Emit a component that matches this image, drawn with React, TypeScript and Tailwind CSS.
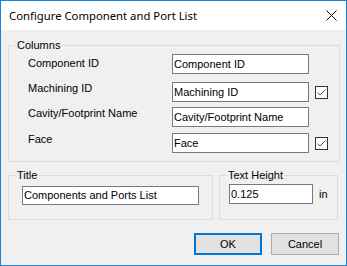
import React from "react"

const font = "font-['Liberation_Sans',Arial,sans-serif] text-[11px] text-black"

function TextBox({ value, width, height = 20 }: { value: string; width: number; height?: number }) {
    return (
        <div
            className={`bg-white border border-[#7a7a7a] pl-[1px] flex items-center leading-[13px] ${font}`}
            style={{ width, height }}
        >
            {value}
        </div>
    )
}

function CheckBox() {
    return (
        <div className="w-[13px] h-[13px] border border-[#333333] bg-white flex items-center justify-center">
            <svg width="11" height="11" viewBox="0 0 11 11">
                <polyline points="1.5,5.5 4,8 9.5,2.5" fill="none" stroke="#555555" strokeWidth="1" />
            </svg>
        </div>
    )
}

function Legend({ children }: { children: React.ReactNode }) {
    return <legend className={`ml-[7px] px-[1px] leading-[13px] ${font}`}>{children}</legend>
}

export default function App() {
    const rows = [
        { label: "Component ID", value: "Component ID", check: false, h: 28, lt: 3 },
        { label: "Machining ID", value: "Machining ID", check: true, h: 25, lt: 0 },
        { label: "Cavity/Footprint Name", value: "Cavity/Footprint Name", check: false, h: 26, lt: 0 },
        { label: "Face", value: "Face", check: true, h: 20, lt: 0 },
    ]
    return (
        <div className="w-[347px] h-[266px] border border-[#1883d7] flex flex-col bg-[#f0f0f0]">
            {/* title bar */}
            <div className="h-[29px] bg-white flex items-center justify-between pl-[8px] pr-[9px] shrink-0">
                <span className="font-['Noto_Sans',sans-serif] text-[11.3px] text-black leading-none">
                    Configure Component and Port List
                </span>
                <svg width="11" height="11" viewBox="0 0 11 11">
                    <path d="M0.5 0.5 L10.5 10.5 M10.5 0.5 L0.5 10.5" stroke="#000" strokeWidth="1" />
                </svg>
            </div>

            <div className="flex-1 flex flex-col pl-[7px] pr-[7px]">
                <fieldset className="mt-[9px] w-[332px] border border-[#dcdcdc]">
                    <Legend>Columns</Legend>
                    <div className="pt-[2px] pb-[8px] pl-[19px]">
                        {rows.map((r) => (
                            <div key={r.label} className="flex items-start" style={{ height: r.h }}>
                                <div className={`w-[144px] leading-[13px] ${font}`} style={{ marginTop: r.lt }}>
                                    {r.label}
                                </div>
                                <div className="flex items-center gap-[6px]">
                                    <TextBox value={r.value} width={137} />
                                    {r.check && <CheckBox />}
                                </div>
                            </div>
                        ))}
                    </div>
                </fieldset>

                <div className="flex gap-[6px] mt-[7px]">
                    <fieldset className="w-[205px] border border-[#dcdcdc]">
                        <Legend>Title</Legend>
                        <div className="pt-[4px] pb-[13px] pl-[13px]">
                            <TextBox value="Components and Ports List" width={177} height={19} />
                        </div>
                    </fieldset>
                    <fieldset className="w-[119px] border border-[#dcdcdc]">
                        <Legend>Text Height</Legend>
                        <div className="pt-[2px] pb-[15px] pl-[9px] flex items-center gap-[6px]">
                            <TextBox value="0.125" width={84} height={20} />
                            <span className={`leading-[13px] ${font}`}>in</span>
                        </div>
                    </fieldset>
                </div>

                <div className="flex justify-end gap-[9px] mt-[13px]">
                    <button className={`w-[68px] h-[22px] bg-[#e1e1e1] border-2 border-[#0078d7] ${font}`}>OK</button>
                    <button className={`w-[68px] h-[22px] bg-[#e1e1e1] border border-[#adadad] ${font}`}>Cancel</button>
                </div>
            </div>
        </div>
    )
}
